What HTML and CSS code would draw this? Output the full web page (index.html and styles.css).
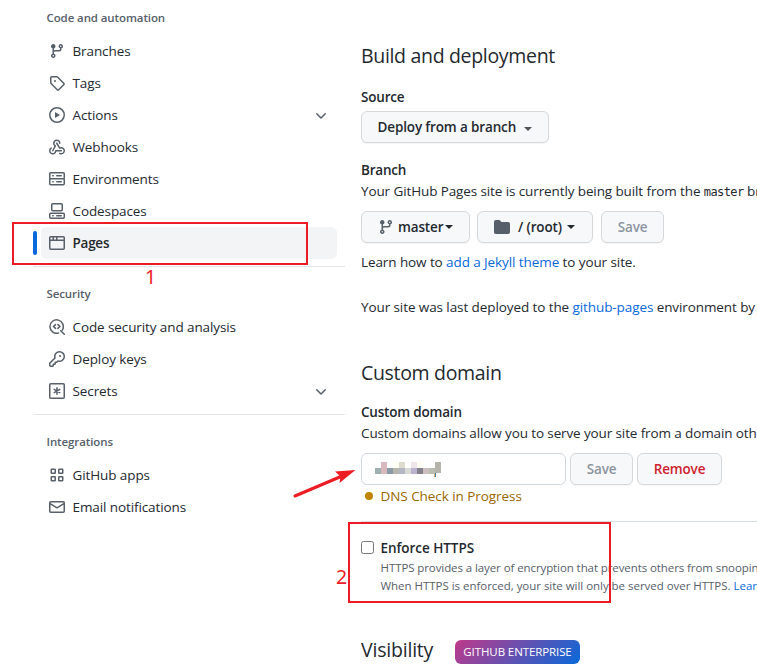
FILE: index.html
```html
<!DOCTYPE html>
<html lang="en">
<head>
<meta charset="utf-8">
<title>Pages settings</title>
<link rel="stylesheet" href="styles.css">
</head>
<body>
<svg class="defs" aria-hidden="true">
<symbol id="branch" viewBox="0 0 16 16"><path d="M11.75 2.5a.75.75 0 100 1.5.75.75 0 000-1.5zm-2.25.75a2.25 2.25 0 113 2.122V6A2.5 2.5 0 0110 8.5H6a1 1 0 00-1 1v1.128a2.251 2.251 0 11-1.5 0V5.372a2.25 2.25 0 111.5 0v1.836A2.492 2.492 0 016 7h4a1 1 0 001-1v-.628A2.25 2.25 0 019.5 3.25zM4.25 12a.75.75 0 100 1.5.75.75 0 000-1.5zM3.5 3.25a.75.75 0 111.5 0 .75.75 0 01-1.5 0z"/></symbol>
<symbol id="chevron" viewBox="0 0 16 16"><path d="M12.78 6.22a.75.75 0 010 1.06l-4.25 4.25a.75.75 0 01-1.06 0L3.22 7.28a.75.75 0 011.06-1.06L8 9.94l3.72-3.72a.75.75 0 011.06 0z"/></symbol>
</svg>
<nav class="sidebar">
  <h3 class="group">Code and automation</h3>
  <ul>
    <li><svg class="icon" viewBox="0 0 16 16"><use href="#branch"/></svg><span>Branches</span></li>
    <li><svg class="icon" viewBox="0 0 16 16"><path fill-rule="evenodd" d="M2.5 7.775V2.75a.25.25 0 01.25-.25h5.025a.25.25 0 01.177.073l6.25 6.25a.25.25 0 010 .354l-5.025 5.025a.25.25 0 01-.354 0l-6.25-6.25a.25.25 0 01-.073-.177zm-1.5 0V2.75C1 1.784 1.784 1 2.75 1h5.025c.464 0 .91.184 1.238.513l6.25 6.25a1.75 1.75 0 010 2.474l-5.026 5.026a1.75 1.75 0 01-2.474 0l-6.25-6.25A1.75 1.75 0 011 7.775zM6 5a1 1 0 100 2 1 1 0 000-2z"/></svg><span>Tags</span></li>
    <li><svg class="icon" viewBox="0 0 16 16"><path fill-rule="evenodd" d="M1.5 8a6.5 6.5 0 1113 0 6.5 6.5 0 01-13 0zM8 0a8 8 0 100 16A8 8 0 008 0zM6.379 5.227A.25.25 0 006 5.442v5.117a.25.25 0 00.379.214l4.264-2.559a.25.25 0 000-.428L6.379 5.227z"/></svg><span>Actions</span><svg class="icon more" viewBox="0 0 16 16"><use href="#chevron"/></svg></li>
    <li><svg class="icon" viewBox="0 0 16 16"><path d="M5.5 4.25a2.25 2.25 0 014.5 0 .75.75 0 001.5 0 3.75 3.75 0 10-6.14 2.889l-2.272 4.258a.75.75 0 001.324.706L7 7.25a.75.75 0 00-.309-1.015A2.25 2.25 0 015.5 4.25z"/><path d="M7.364 3.607a.75.75 0 011.03.257l2.608 4.349a3.75 3.75 0 11-.628 6.785.75.75 0 01.752-1.299 2.25 2.25 0 10-.033-3.88.75.75 0 01-1.03-.256L7.107 4.636a.75.75 0 01.257-1.03z"/><path d="M2.9 8.776A.75.75 0 012.625 9.8 2.25 2.25 0 106 11.75a.75.75 0 01.75-.751h5.5a.75.75 0 010 1.5H7.425a3.751 3.751 0 11-5.55-3.998.75.75 0 011.024.274z"/></svg><span>Webhooks</span></li>
    <li><svg class="icon" viewBox="0 0 16 16"><path fill-rule="evenodd" d="M1.75 1h12.5c.966 0 1.75.784 1.75 1.75v4c0 .372-.116.717-.314 1 .198.283.314.628.314 1v4a1.75 1.75 0 01-1.75 1.75H1.75A1.75 1.75 0 010 12.75v-4c0-.358.109-.707.314-1a1.739 1.739 0 01-.314-1v-4C0 1.784.784 1 1.75 1zM1.5 2.75v4c0 .138.112.25.25.25h12.5a.25.25 0 00.25-.25v-4a.25.25 0 00-.25-.25H1.75a.25.25 0 00-.25.25zm.25 5.75a.25.25 0 00-.25.25v4c0 .138.112.25.25.25h12.5a.25.25 0 00.25-.25v-4a.25.25 0 00-.25-.25H1.75zM7 4.75A.75.75 0 017.75 4h4.5a.75.75 0 010 1.5h-4.5A.75.75 0 017 4.75zM7.75 10h4.5a.75.75 0 010 1.5h-4.5a.75.75 0 010-1.5zM3 4.75A.75.75 0 013.75 4h.5a.75.75 0 010 1.5h-.5A.75.75 0 013 4.75zM3.75 10h.5a.75.75 0 010 1.5h-.5a.75.75 0 010-1.5z"/></svg><span>Environments</span></li>
    <li><svg class="icon" viewBox="0 0 16 16"><path fill-rule="evenodd" d="M2 1.75C2 .784 2.784 0 3.75 0h8.5C13.216 0 14 .784 14 1.75v5a1.75 1.75 0 01-1.75 1.75h-8.5A1.75 1.75 0 012 6.75v-5zm1.75-.25a.25.25 0 00-.25.25v5c0 .138.112.25.25.25h8.5a.25.25 0 00.25-.25v-5a.25.25 0 00-.25-.25h-8.5zM0 11.25c0-.966.784-1.75 1.75-1.75h12.5c.966 0 1.75.784 1.75 1.75v3A1.75 1.75 0 0114.25 16H1.75A1.75 1.75 0 010 14.25v-3zM1.75 11a.25.25 0 00-.25.25v3c0 .138.112.25.25.25h12.5a.25.25 0 00.25-.25v-3a.25.25 0 00-.25-.25H1.75zM3 12.75a.75.75 0 01.75-.75h.5a.75.75 0 010 1.5h-.5a.75.75 0 01-.75-.75zm4 0a.75.75 0 01.75-.75h4.5a.75.75 0 010 1.5h-4.5a.75.75 0 01-.75-.75z"/></svg><span>Codespaces</span></li>
    <li class="current"><svg class="icon" viewBox="0 0 16 16"><path fill-rule="evenodd" d="M0 2.75C0 1.784.784 1 1.75 1h12.5c.966 0 1.75.784 1.75 1.75v10.5A1.75 1.75 0 0114.25 15H1.75A1.75 1.75 0 010 13.25V2.75zm1.75-.25a.25.25 0 00-.25.25V4.5h2v-2H1.75zM5 2.5v2h2v-2H5zm3.5 0v2h6V2.75a.25.25 0 00-.25-.25H8.5zm6 3.5h-13v7.25c0 .138.112.25.25.25h12.5a.25.25 0 00.25-.25V6z"/></svg><span>Pages</span></li>
  </ul>
  <h3 class="group divided">Security</h3>
  <ul>
    <li><svg class="icon line" viewBox="0 0 16 16"><path d="M9.5 14A6.7 6.7 0 1 1 13.3 11.1M11.7 11.7L15.3 15.3M6.5 5.6L4.5 7.5L6.5 9.4M8.9 5.6L10.9 7.5L8.9 9.4"/></svg><span>Code security and analysis</span></li>
    <li><svg class="icon" viewBox="0 0 16 16"><path fill-rule="evenodd" d="M6.5 5.5a4 4 0 112.731 3.795.75.75 0 00-.768.18L7.44 10.5H6.25a.75.75 0 00-.75.75v1.19l-.06.06H4.25a.75.75 0 00-.75.75v1.19l-.06.06H1.75a.25.25 0 01-.25-.25v-1.69l5.024-5.023a.75.75 0 00.181-.768A3.995 3.995 0 016.5 5.5zm4-5.5a5.5 5.5 0 00-5.348 6.788L.22 11.72a.75.75 0 00-.22.53v2C0 15.216.784 16 1.75 16h2a.75.75 0 00.53-.22l.5-.5a.75.75 0 00.22-.53V14h.75a.75.75 0 00.53-.22l.5-.5a.75.75 0 00.22-.53V12h.75a.75.75 0 00.53-.22l.932-.932A5.5 5.5 0 1010.5 0zm.5 6a1 1 0 100-2 1 1 0 000 2z"/></svg><span>Deploy keys</span></li>
    <li><svg class="icon line" viewBox="0 0 16 16"><rect x=".75" y=".75" width="14.5" height="14.5" rx="1"/><path d="M8 4.8v6.4M5.2 6.4l5.6 3.2M5.2 9.6l5.6-3.2"/></svg><span>Secrets</span><svg class="icon more" viewBox="0 0 16 16"><use href="#chevron"/></svg></li>
  </ul>
  <h3 class="group divided">Integrations</h3>
  <ul>
    <li><svg class="icon line" viewBox="0 0 16 16"><rect x="2.25" y="2.25" width="4" height="4" rx=".5"/><rect x="9.75" y="2.25" width="4" height="4" rx=".5"/><rect x="2.25" y="9.75" width="4" height="4" rx=".5"/><rect x="9.75" y="9.75" width="4" height="4" rx=".5"/></svg><span>GitHub apps</span></li>
    <li><svg class="icon" viewBox="0 0 16 16"><path fill-rule="evenodd" d="M1.75 2A1.75 1.75 0 000 3.75v.736a.75.75 0 000 .027v7.737C0 13.216.784 14 1.75 14h12.5A1.75 1.75 0 0016 12.25v-8.5A1.75 1.75 0 0014.25 2H1.75zM14.5 4.07v-.32a.25.25 0 00-.25-.25H1.75a.25.25 0 00-.25.25v.32L8 7.88l6.5-3.81zm-13 1.74v6.441c0 .138.112.25.25.25h12.5a.25.25 0 00.25-.25V5.809L8.38 9.397a.75.75 0 01-.76 0L1.5 5.809z"/></svg><span>Email notifications</span></li>
  </ul>
</nav>
<main class="content">
  <h2 class="title">Build and deployment</h2>
  <h4 class="label">Source</h4>
  <button class="btn source">Deploy from a branch<i class="caret"></i></button>
  <h4 class="label branch-label">Branch</h4>
  <p class="text built">Your GitHub Pages site is currently being built from the <code>master</code> br</p>
  <div class="row branch-row">
    <button class="btn ref"><svg class="icon" viewBox="0 0 16 16"><use href="#branch"/></svg>master<i class="caret"></i></button>
    <button class="btn folder"><svg class="icon" viewBox="0 0 16 16"><path d="M1.75 1A1.75 1.75 0 000 2.75v10.5C0 14.216.784 15 1.75 15h12.5A1.75 1.75 0 0016 13.25v-8.5A1.75 1.75 0 0014.25 3H7.5a.25.25 0 01-.2-.1l-.9-1.2C6.07 1.26 5.55 1 5 1H1.75z"/></svg>/ (root)<i class="caret"></i></button>
    <button class="btn save off">Save</button>
  </div>
  <p class="text learn">Learn how to <a>add a Jekyll theme</a> to your site.</p>
  <p class="text deployed">Your site was last deployed to the <a>github-pages</a> environment by</p>
  <h2 class="title domain">Custom domain</h2>
  <h4 class="label">Custom domain</h4>
  <p class="text custom">Custom domains allow you to serve your site from a domain oth</p>
  <div class="row domain-row">
    <div class="input"><svg class="mosaic" viewBox="0 0 66 16" shape-rendering="crispEdges">
      <path fill="#9faeae" d="M0 6h6v6H0z"/><path fill="#d8b9bd" d="M6 0h6v12H6z"/><path fill="#8c9aa5" d="M12 6h6v6h-6z"/><path fill="#fffef4" d="M18 0h6v6h-6z"/><path fill="#b6b5ad" d="M18 6h6v6h-6z"/><path fill="#dddccf" d="M24 0h6v6h-6z"/><path fill="#b3b6c3" d="M24 6h6v6h-6z"/><path fill="#d9d9d6" d="M30 6h6v6h-6z"/><path fill="#f0e5e9" d="M36 0h6v6h-6z"/><path fill="#bdb2ce" d="M36 6h6v6h-6z"/><path fill="#fffdf3" d="M42 0h6v6h-6z"/><path fill="#85808c" d="M42 6h6v6h-6z"/><path fill="#cdbfbf" d="M48 6h6v6h-6z"/><path fill="#bbbdb1" d="M54 6h6v6h-6z"/><path fill="#b4b4aa" d="M60 0h6v11h-6z"/><path fill="#e8a860" d="M59 12h1v3h-1z"/><path fill="#3f7fae" d="M60 11h1v4h-1z"/></svg></div>
    <button class="btn save off">Save</button>
    <button class="btn danger">Remove</button>
  </div>
  <p class="dns"><i class="dot"></i>DNS Check in Progress</p>
  <div class="https">
    <input type="checkbox" class="check" aria-label="Enforce HTTPS">
    <div>
      <h4 class="label enforce">Enforce HTTPS</h4>
      <p class="note first">HTTPS provides a layer of encryption that prevents others from snoopin</p>
      <p class="note">When HTTPS is enforced, your site will only be served over HTTPS. <a>Lear</a></p>
    </div>
  </div>
  <div class="row visibility">
    <h2 class="title">Visibility</h2>
    <span class="badge">GITHUB ENTERPRISE</span>
  </div>
</main>
<div class="mark box-one"></div>
<div class="mark box-two"></div>
<span class="num one">1</span>
<span class="num two">2</span>
<svg class="arrow" viewBox="0 0 66 34"><path d="M4 29L50 9.500" stroke="#ed1c24" stroke-width="3" stroke-linecap="round"/><path fill="#ed1c24" d="M64.500 3L44 4.500L49.500 9.500L48.500 16Z"/></svg>
</body>
</html>
```

FILE: styles.css
```css
* { box-sizing: border-box; }
body { margin: 0; width: 757px; height: 669px; overflow: hidden; position: relative; display: flex; background: #fff; color: #24292f; font: 13.5px/20px "Open Sans", "Noto Sans", sans-serif; letter-spacing: -.1px; }
h2, h3, h4, p, ul { margin: 0; padding: 0; }
a { color: #0969da; }
.defs { position: absolute; width: 0; height: 0; }
.icon { width: 16px; height: 16px; flex: none; fill: #57606a; }
.line { fill: none; stroke: #57606a; stroke-width: 1.5; stroke-linecap: round; stroke-linejoin: round; }
.sidebar { width: 312px; margin-left: 33px; flex: none; padding-top: 9px; }
.sidebar ul { list-style: none; padding: 0 8px; }
.sidebar li { height: 32px; display: flex; align-items: center; gap: 7.5px; padding: 0 8px; border-radius: 6px; }
.group { font-size: 11.5px; line-height: 18px; font-weight: 600; color: #57606a; padding-left: 13.5px; margin-bottom: 8px; }
.divided { border-top: 1px solid #e3e6e9; margin-top: 7px; padding-top: 18px; margin-bottom: 8px; }
.more { margin-left: auto; }
.current { position: relative; background: #f3f4f6; font-weight: 600; letter-spacing: -.25px; }
.current::before { content: ""; position: absolute; left: -8px; top: 4px; width: 4px; height: 24px; border-radius: 6px; background: #0969da; }
.content { width: 412px; margin-left: 15.5px; padding-left: .5px; flex: none; overflow: hidden; padding-top: 41px; white-space: nowrap; }
.title { font-size: 19.5px; line-height: 30px; font-weight: 400; letter-spacing: -.32px; margin-bottom: 16px; }
.label { font-size: 13.5px; line-height: 20px; font-weight: 600; letter-spacing: -.2px; }
.enforce { letter-spacing: -.05px; }
.row { display: flex; }
.btn { height: 32px; display: flex; align-items: center; padding: 0 15.5px; border: 1px solid #d5d8da; border-radius: 6px; background: #f6f8fa; box-shadow: 0 1px 0 rgba(27,31,36,.04); color: #24292f; font: 600 13.5px/20px "Open Sans", sans-serif; letter-spacing: -.14px; white-space: nowrap; }
.caret { border: 4px solid transparent; border-top-color: currentColor; border-bottom: 0; margin-left: 5px; }
.source { width: 188px; margin-top: 4px; }
.source .caret { margin-left: 8px; margin-top: 3px; opacity: .8; }
.branch-label { margin-top: 17px; }
.text { line-height: 20px; margin-top: 1px; }
.built { letter-spacing: -.11px; }
code { font: 12px "DejaVu Sans Mono", monospace; letter-spacing: -.6px; }
.branch-row { margin-top: 10px; }
.ref { width: 109px; margin-right: 7px; padding-left: 16px; }
.ref .icon { margin-right: 4px; }
.ref .caret { margin-left: 2px; }
.folder { width: 116px; margin-right: 8px; padding-left: 16px; }
.folder .icon { margin-right: 8px; }
.save { width: 63px; justify-content: center; padding: 0; }
.off { color: #8c959f; }
.learn { margin-top: 9px; letter-spacing: -.09px; }
.deployed { margin-top: 25px; letter-spacing: -.09px; }
.domain { margin-top: 41px; margin-bottom: 14px; }
.custom { letter-spacing: -.12px; }
.domain-row { margin-top: 10px; gap: 4px; }
.input { width: 205px; height: 32px; border: 1px solid #d0d7de; border-radius: 6px; padding: 8px 13px; }
.mosaic { display: block; width: 66px; height: 16px; }
.danger { width: 85px; padding: 0; justify-content: center; color: #cf222e; }
.dns { display: flex; align-items: center; color: #9a6700; line-height: 20px; margin-top: 1px; padding-left: 4px; letter-spacing: -.06px; }
.dot { width: 8px; height: 8px; border-radius: 50%; background: #bf8700; margin-right: 7.5px; }
.https { border-top: 1px solid #d8dee4; margin-top: 15px; padding-top: 16px; display: flex; }
.check { width: 13px; height: 13px; margin: 3px 6.5px 0 0; }
.note { font-size: 11.5px; line-height: 18px; color: #57606a; letter-spacing: -.03px; }
.first { margin-top: 1px; letter-spacing: -.09px; }
.visibility { margin-top: 40px; }
.visibility .title { width: 73px; letter-spacing: -.2px; }
.badge { width: 125px; height: 24px; margin: 5px 0 0 21px; border-radius: 6px; background: linear-gradient(135deg, #bf3989, #0969da); color: #fff; font-size: 11.5px; line-height: 24px; text-align: center; }
.mark { position: absolute; border: 2px solid #ed1c24; }
.box-one { left: 12px; top: 222px; width: 296px; height: 43px; }
.box-two { left: 348px; top: 522px; width: 263px; height: 81px; }
.num { position: absolute; color: #ed1c24; font: 19.5px/20px "Noto Sans", sans-serif; }
.one { left: 145px; top: 267px; }
.two { left: 336px; top: 567px; }
.arrow { position: absolute; left: 291px; top: 467px; width: 66px; height: 34px; fill: none; }
```
